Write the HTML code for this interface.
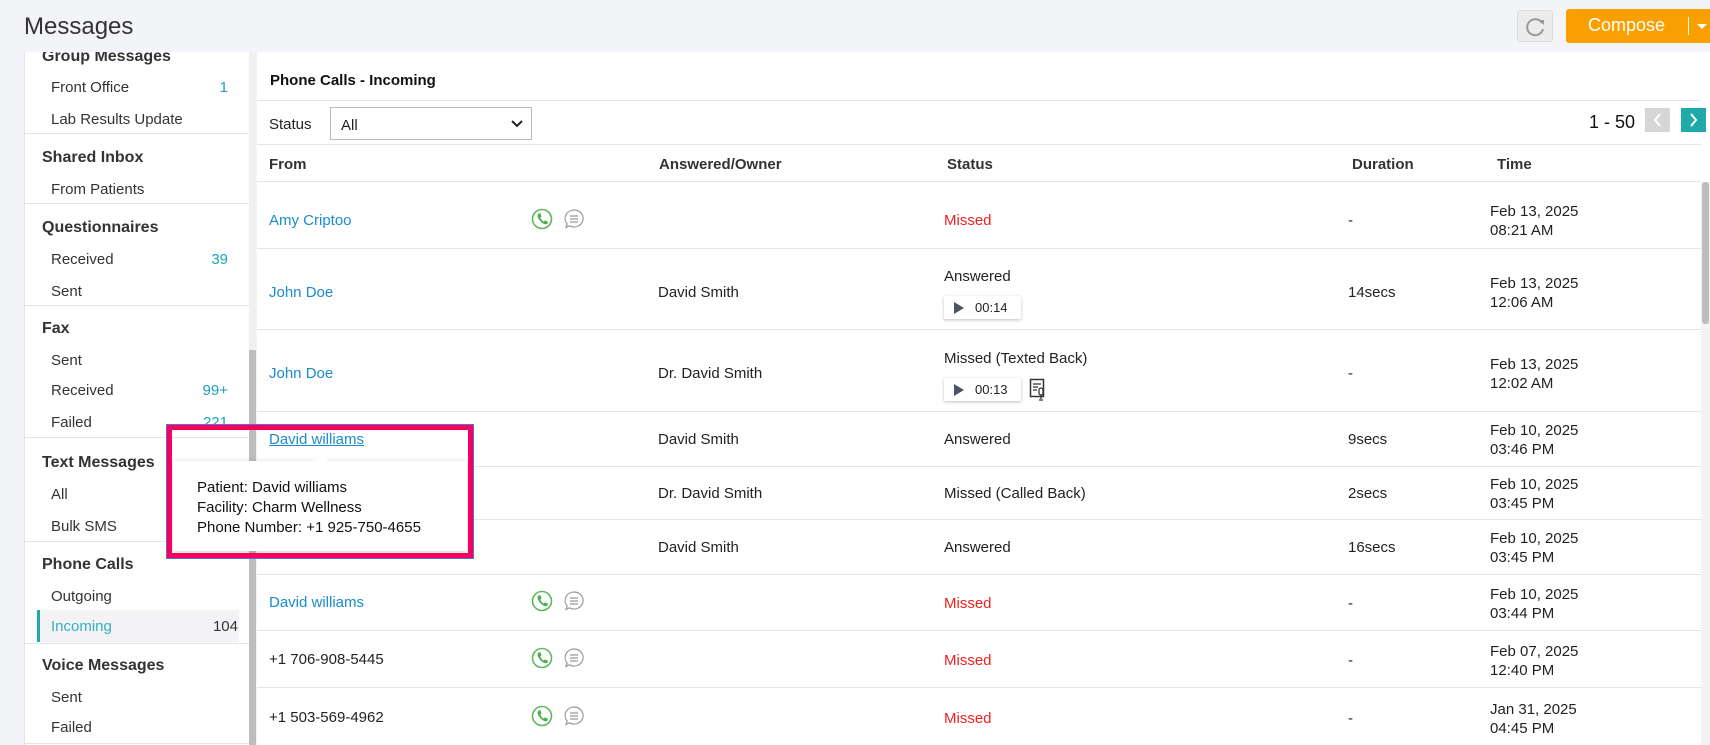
<!DOCTYPE html>
<html><head><meta charset="utf-8"><style>
*{box-sizing:border-box;margin:0;padding:0}
body{width:1710px;height:745px;overflow:hidden;background:#f3f4f8;font-family:"Liberation Sans",sans-serif;color:#222;font-size:15px;position:relative}
.abs{position:absolute}
.t{position:absolute;white-space:nowrap;margin-top:2px}
.side{position:absolute;left:24px;top:52px;width:225px;height:693px;background:#fff;overflow:hidden;border-left:1px solid #e4e4e4}
.sh{position:absolute;left:17px;font-weight:bold;font-size:16px;color:#333;margin-top:2px}
.si{position:absolute;left:26px;font-size:15px;color:#333;margin-top:2px}
.cnt{position:absolute;right:21px;color:#1a9fbf;font-size:15px;margin-top:2px}
.sl{position:absolute;left:0;width:225px;height:1px;background:#e6e6e6}
.main{position:absolute;left:257px;top:52px;width:1453px;height:693px;background:#fff}
.hl{position:absolute;left:0;width:1444px;height:1px;background:#e6e6e6}
.lnk{color:#1a8ccc}
.red{color:#ee2222}
.play{position:absolute;width:77px;height:23px;background:#fff;box-shadow:0 1px 3px rgba(0,0,0,.25);font-size:13px;color:#222}
.play:before{content:"";position:absolute;left:10px;top:6px;border-left:10px solid #4a5563;border-top:6px solid transparent;border-bottom:6px solid transparent}
.play span{position:absolute;left:31px;top:4px}
</style></head><body>
<div class="t" style="left:24px;top:11px;font-size:24px;color:#333">Messages</div>
<div class="abs" style="left:1517px;top:10px;width:36px;height:32px;background:#ececec;border:1px solid #ddd;border-radius:3px">
<svg width="36" height="32" viewBox="0 0 36 32"><path d="M24 12 A8 8 0 1 0 25 18" fill="none" stroke="#999" stroke-width="2"/><path d="M20 9 L26 9 L26 14 Z" fill="#999"/></svg></div>
<div class="abs" style="left:1566px;top:9px;width:144px;height:34px;background:#f9a000;border-radius:3px 0 0 3px;color:#fff;font-size:18px">
<span class="t" style="left:22px;top:6px;margin-top:0">Compose</span>
<span class="abs" style="left:122px;top:8px;width:1px;height:18px;background:#fff"></span>
<span class="abs" style="left:131px;top:15px;border-top:5px solid #fff;border-left:5px solid transparent;border-right:5px solid transparent"></span></div>

<div class="side">
<div class="sh" style="top:-6px">Group Messages</div>
<div class="si" style="top:25px">Front Office</div><div class="cnt" style="top:25px">1</div>
<div class="si" style="top:57px">Lab Results Update</div>
<div class="sl" style="top:81px"></div>
<div class="sh" style="top:95px">Shared Inbox</div>
<div class="si" style="top:127px">From Patients</div>
<div class="sl" style="top:151px"></div>
<div class="sh" style="top:165px">Questionnaires</div>
<div class="si" style="top:197px">Received</div><div class="cnt" style="top:197px">39</div>
<div class="si" style="top:229px">Sent</div>
<div class="sl" style="top:253px"></div>
<div class="sh" style="top:266px">Fax</div>
<div class="si" style="top:298px">Sent</div>
<div class="si" style="top:328px">Received</div><div class="cnt" style="top:328px">99+</div>
<div class="si" style="top:360px">Failed</div><div class="cnt" style="top:360px">221</div>
<div class="sl" style="top:385px"></div>
<div class="sh" style="top:400px">Text Messages</div>
<div class="si" style="top:432px">All</div>
<div class="si" style="top:464px">Bulk SMS</div>
<div class="sl" style="top:489px"></div>
<div class="sh" style="top:502px">Phone Calls</div>
<div class="si" style="top:534px">Outgoing</div>
<div class="abs" style="left:12px;top:558px;width:202px;height:32px;background:#f3f3f6;border-left:3px solid #1fa9a9"></div>
<div class="si" style="top:564px;color:#35b0c0">Incoming</div><div class="cnt" style="top:564px;right:11px;color:#333">104</div>
<div class="sl" style="top:591px"></div>
<div class="sh" style="top:603px">Voice Messages</div>
<div class="si" style="top:635px">Sent</div>
<div class="si" style="top:665px">Failed</div>
<div class="sl" style="top:691px"></div>
</div>
<div class="abs" style="left:249px;top:350px;width:7px;height:395px;background:#bdbdbd"></div>
<div class="abs" style="left:249px;top:52px;width:7px;height:298px;background:#f0f0f0"></div>

<div class="main">
<div class="t" style="left:13px;top:18px;font-weight:bold;font-size:15px;color:#111">Phone Calls - Incoming</div>
<div class="hl" style="top:48px"></div>
<div class="t" style="left:12px;top:62px;font-size:15px">Status</div>
<div class="abs" style="left:73px;top:55px;width:202px;height:33px;border:1px solid #bbb;background:#fff"><span class="t" style="left:10px;top:7px">All</span>
<svg class="abs" style="left:180px;top:12px" width="12" height="8"><path d="M1 1 L6 6 L11 1" fill="none" stroke="#222" stroke-width="2"/></svg></div>
<div class="t" style="left:1332px;top:58px;font-size:18px;color:#111">1 - 50</div>
<div class="abs" style="left:1388px;top:56px;width:25px;height:24px;background:#d6d6d6"><svg width="25" height="24"><path d="M15 6 L10 12 L15 18" fill="none" stroke="#fff" stroke-width="2"/></svg></div>
<div class="abs" style="left:1424px;top:56px;width:25px;height:24px;background:#1fa9a9"><svg width="25" height="24"><path d="M10 6 L15 12 L10 18" fill="none" stroke="#fff" stroke-width="2"/></svg></div>
<div class="hl" style="top:92px"></div>
<div style="font-weight:bold;font-size:15px;color:#333">
<div class="t" style="left:12px;top:102px">From</div>
<div class="t" style="left:402px;top:102px">Answered/Owner</div>
<div class="t" style="left:690px;top:102px">Status</div>
<div class="t" style="left:1095px;top:102px">Duration</div>
<div class="t" style="left:1240px;top:102px">Time</div>
</div>
<div class="hl" style="top:129px"></div>
<div class="abs" style="left:1444px;top:130px;width:9px;height:563px;background:#f3f3f3"></div>
<div class="abs" style="left:1445px;top:130px;width:7px;height:142px;background:#bdbdbd;border-radius:3px"></div>

<div class="t lnk" style="left:12px;top:158px">Amy Criptoo</div>
<div class="t red" style="left:687px;top:158px">Missed</div>
<div class="t" style="left:1091px;top:158px">-</div>
<div class="t" style="left:1233px;top:148px;line-height:19px">Feb 13, 2025<br>08:21 AM</div>
<div class="hl" style="top:196px"></div>

<div class="t lnk" style="left:12px;top:230px">John Doe</div>
<div class="t" style="left:401px;top:230px">David Smith</div>
<div class="t" style="left:687px;top:214px">Answered</div>
<div class="play" style="left:687px;top:244px"><span>00:14</span></div>
<div class="t" style="left:1091px;top:230px">14secs</div>
<div class="t" style="left:1233px;top:220px;line-height:19px">Feb 13, 2025<br>12:06 AM</div>
<div class="hl" style="top:277px"></div>

<div class="t lnk" style="left:12px;top:311px">John Doe</div>
<div class="t" style="left:401px;top:311px">Dr. David Smith</div>
<div class="t" style="left:687px;top:296px">Missed (Texted Back)</div>
<div class="play" style="left:687px;top:326px"><span>00:13</span></div>
<svg class="abs" style="left:772px;top:326px" width="18" height="24" viewBox="0 0 18 24"><rect x="1.5" y="1.5" width="13" height="17" fill="none" stroke="#333" stroke-width="1.5"/><path d="M4 6h8M4 9h5M4 12h4" stroke="#333" stroke-width="1.3"/><rect x="10" y="10" width="4" height="7" rx="2" fill="#fff" stroke="#333" stroke-width="1.3"/><path d="M12 17v4M10 22h4" stroke="#333" stroke-width="1.3"/></svg>
<div class="t" style="left:1091px;top:311px">-</div>
<div class="t" style="left:1233px;top:301px;line-height:19px">Feb 13, 2025<br>12:02 AM</div>
<div class="hl" style="top:359px"></div>

<div class="t lnk" style="left:12px;top:377px;text-decoration:underline">David williams</div>
<div class="t" style="left:401px;top:377px">David Smith</div>
<div class="t" style="left:687px;top:377px">Answered</div>
<div class="t" style="left:1091px;top:377px">9secs</div>
<div class="t" style="left:1233px;top:367px;line-height:19px">Feb 10, 2025<br>03:46 PM</div>
<div class="hl" style="top:414px"></div>

<div class="t" style="left:401px;top:431px">Dr. David Smith</div>
<div class="t" style="left:687px;top:431px">Missed (Called Back)</div>
<div class="t" style="left:1091px;top:431px">2secs</div>
<div class="t" style="left:1233px;top:421px;line-height:19px">Feb 10, 2025<br>03:45 PM</div>
<div class="hl" style="top:467px"></div>

<div class="t" style="left:401px;top:485px">David Smith</div>
<div class="t" style="left:687px;top:485px">Answered</div>
<div class="t" style="left:1091px;top:485px">16secs</div>
<div class="t" style="left:1233px;top:475px;line-height:19px">Feb 10, 2025<br>03:45 PM</div>
<div class="hl" style="top:522px"></div>

<div class="t lnk" style="left:12px;top:540px">David williams</div>
<div class="t red" style="left:687px;top:541px">Missed</div>
<div class="t" style="left:1091px;top:541px">-</div>
<div class="t" style="left:1233px;top:531px;line-height:19px">Feb 10, 2025<br>03:44 PM</div>
<div class="hl" style="top:578px"></div>

<div class="t" style="left:12px;top:597px">+1 706-908-5445</div>
<div class="t red" style="left:687px;top:598px">Missed</div>
<div class="t" style="left:1091px;top:598px">-</div>
<div class="t" style="left:1233px;top:588px;line-height:19px">Feb 07, 2025<br>12:40 PM</div>
<div class="hl" style="top:635px"></div>

<div class="t" style="left:12px;top:655px">+1 503-569-4962</div>
<div class="t red" style="left:687px;top:656px">Missed</div>
<div class="t" style="left:1091px;top:656px">-</div>
<div class="t" style="left:1233px;top:646px;line-height:19px">Jan 31, 2025<br>04:45 PM</div>
</div>

<svg width="0" height="0" style="position:absolute"><defs>
<g id="ph"><circle cx="11" cy="11" r="9.5" fill="#fff" stroke="#5cb85c" stroke-width="1.6"/><path d="M7.5 5.5 L9.5 5.3 L10.5 8.5 L9.2 9.6 Q10.5 12.5 12.8 13.6 L14 12.4 L16.8 13.6 L16.5 15.6 Q14.8 17.2 11.5 15 Q7.5 12 6.6 8.5 Q6.4 6.4 7.5 5.5Z" fill="#4cae4c"/></g>
<g id="ch"><path d="M11 2 A9 8.5 0 1 1 6.5 17.8 L3 19.5 L4.2 16 A9 8.5 0 0 1 11 2Z" fill="#fff" stroke="#999" stroke-width="1.2"/><path d="M7 8h8M7 11h8M7 14h8" stroke="#999" stroke-width="1.2"/></g>
</defs></svg>
<svg class="abs" style="left:531px;top:208px" width="22" height="22"><use href="#ph"/></svg>
<svg class="abs" style="left:563px;top:208px" width="22" height="22"><use href="#ch"/></svg>
<svg class="abs" style="left:531px;top:590px" width="22" height="22"><use href="#ph"/></svg>
<svg class="abs" style="left:563px;top:590px" width="22" height="22"><use href="#ch"/></svg>
<svg class="abs" style="left:531px;top:647px" width="22" height="22"><use href="#ph"/></svg>
<svg class="abs" style="left:563px;top:647px" width="22" height="22"><use href="#ch"/></svg>
<svg class="abs" style="left:531px;top:705px" width="22" height="22"><use href="#ph"/></svg>
<svg class="abs" style="left:563px;top:705px" width="22" height="22"><use href="#ch"/></svg>

<div class="abs" style="left:173px;top:461px;width:294px;height:90px;background:#fff;box-shadow:0 1px 6px rgba(0,0,0,.2);border-radius:3px"></div>
<div class="abs" style="left:314px;top:454px;border-bottom:7px solid #fff;border-left:7px solid transparent;border-right:7px solid transparent"></div>
<div class="t" style="left:197px;top:476px;font-size:15px;line-height:20px;color:#111">Patient: David williams<br>Facility: Charm Wellness<br>Phone Number: +1 925-750-4655</div>
<div class="abs" style="left:167px;top:425px;width:306px;height:133px;border:5px solid #f7005a;box-shadow:0 0 0 1px #5b6be0"></div>
</body></html>
